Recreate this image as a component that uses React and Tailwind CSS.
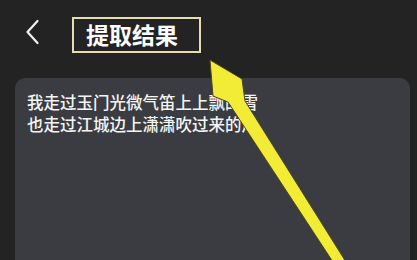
import React from 'react';

const ResultPage = () => {
  return (
    <div
      className="relative w-[417px] h-[260px] overflow-hidden bg-[#232324]"
      style={{ fontFamily: '"Noto Sans CJK SC", "Noto Sans", sans-serif' }}
    >
      {/* Header */}
      <div className="flex items-center h-[70px] pl-[26px]">
        <svg width="14" height="26" viewBox="0 0 14 26" className="mt-[-6px]">
          <path d="M11.5 2 L1.5 13 L11.5 24" fill="none" stroke="#f2f2f2" strokeWidth="2.2" strokeLinecap="round" strokeLinejoin="round" />
        </svg>
        <div className="ml-[32px] mt-[-1px] w-[129px] h-[36px] border-2 border-[#e6ddb0] flex items-center pl-[12px]">
          <span className="text-[23px] leading-none font-bold text-white">提取结果</span>
        </div>
      </div>

      {/* Result card */}
      <div className="ml-[15px] mr-[7px] mt-[8px] h-[200px] rounded-[10px] bg-[#3a3c41] pl-[12px] pt-[13px]">
        <p className="text-[16.5px] leading-[22px] font-medium text-[#f4f4f4]">我走过玉门光微气笛上上飘的雪</p>
        <p className="text-[16.5px] leading-[22px] font-medium text-[#f4f4f4]">也走过江城边上潇潇吹过来的风</p>
      </div>

      {/* Annotation arrow */}
      <svg className="absolute inset-0 pointer-events-none" width="417" height="260" viewBox="0 0 417 260">
        <polygon
          points="210,60 242,79 245,101 346,262 333,262 228,102 213,96"
          fill="#f3ec36"
          stroke="#4a4720"
          strokeWidth="1"
          strokeLinejoin="round"
        />
      </svg>
    </div>
  );
};

export default function App() {
  return <ResultPage />;
}
